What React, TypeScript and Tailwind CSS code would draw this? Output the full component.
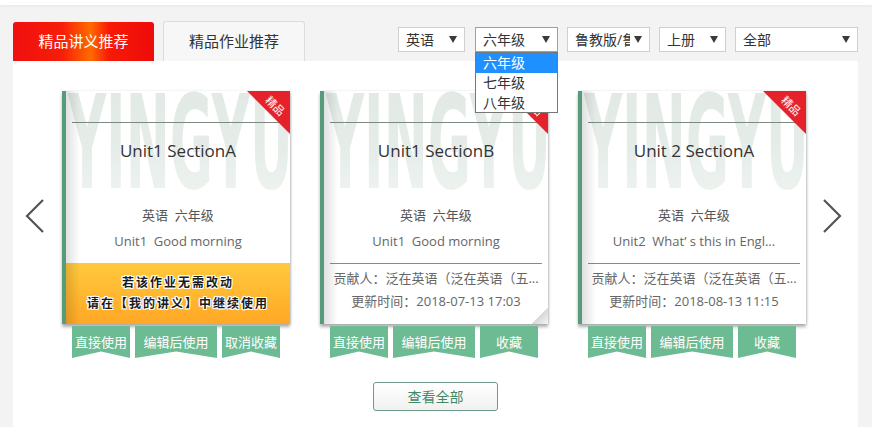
import React from "react";

const FONT = { fontFamily: '"Open Sans","Noto Sans CJK SC",sans-serif' };

function Caret() {
  return (
    <svg width="8" height="7" viewBox="0 0 8 7" className="shrink-0">
      <polygon points="0,0 8,0 4,7" fill="#3a3a3a" />
    </svg>
  );
}

function Select({ w, label, active }: { w: string; label: string; active?: boolean }) {
  return (
    <div
      className={`${w} h-[25px] bg-white border ${active ? "border-[#7ea6d6]" : "border-[#cfcfcf]"} flex items-center pl-[7px] pr-[7px] text-[14px] text-[#333] overflow-hidden`}
    >
      <span className="flex-1 whitespace-nowrap overflow-hidden">{label}</span>
      <span className="bg-white pl-[4px] flex items-center">
        <Caret />
      </span>
    </div>
  );
}

function Watermark() {
  return (
    <div
      className="absolute left-[2px] top-[-13px] text-[130px] leading-none font-bold whitespace-nowrap origin-top-left scale-x-[0.405] pointer-events-none select-none text-transparent bg-clip-text bg-[linear-gradient(180deg,#e1e9e4_0%,#e6ede9_55%,#f0f4f1_100%)]"
      style={{ fontFamily: '"DejaVu Sans",sans-serif' }}
    >
      YINGYU
    </div>
  );
}

function Corner() {
  return (
    <div className="absolute top-0 right-0 w-[43px] h-[43px]">
      <div className="absolute inset-0 bg-[#e5222b] [clip-path:polygon(0_0,100%_0,100%_100%)]" />
      <div className="absolute left-[15px] top-[8px] w-[26px] h-[14px] leading-[14px] text-[11px] text-white text-center rotate-45">
        精品
      </div>
    </div>
  );
}

function Ribbon({ w, label }: { w: string; label: string }) {
  return (
    <div
      className={`${w} h-[32px] bg-[#6dbb93] text-white text-[13px] leading-[18px] pt-[7px] text-center [clip-path:polygon(0_0,100%_0,100%_100%,50%_80%,0_100%)]`}
    >
      {label}
    </div>
  );
}

type CardProps = {
  title: string;
  line2: string;
  orange?: boolean;
  contributor?: string;
  time?: string;
  third: string;
  curl?: boolean;
};

function Card({ title, line2, orange, contributor, time, third, curl }: CardProps) {
  return (
    <div className="w-[228px] flex flex-col shrink-0">
      <div className="relative w-[228px] h-[233px] bg-white border-l-[4px] border-[#579c7a] overflow-hidden shadow-[0_3px_3px_rgba(0,0,0,0.3),1px_0_2px_rgba(0,0,0,0.12)]">
        <Watermark />
        <div className="absolute left-[6px] right-[7px] top-[31px] h-px bg-[#7b8b82]" />
        <Corner />
        <div className="absolute left-0 right-0 top-[47px] text-center text-[17px] text-[#333]">{title}</div>
        <div className="absolute left-0 right-0 top-[115px] text-center text-[13px] text-[#555] whitespace-pre">英语  六年级</div>
        <div className="absolute left-0 right-0 top-[141px] text-center text-[13px] text-[#666] whitespace-pre">{line2}</div>
        {orange ? (
          <div className="absolute left-0 right-0 top-[172px] bottom-0 bg-[linear-gradient(180deg,#ffc93e_0%,#ffb52e_60%,#ffa726_100%)] flex flex-col items-center justify-center gap-[3px] text-[12px] text-[#1a1a1a] tracking-[2px] font-bold [text-shadow:1px_1px_0_#fff,-1px_-1px_0_#fff,1px_-1px_0_#fff,-1px_1px_0_#fff,0_1px_0_#fff,0_-1px_0_#fff,1px_0_0_#fff,-1px_0_0_#fff]">
            <div>若该作业无需改动</div>
            <div>请在【我的讲义】中继续使用</div>
          </div>
        ) : (
          <>
            <div className="absolute left-[6px] right-[6px] top-[172px] h-px bg-[#8a8a8a]" />
            <div className="absolute left-0 right-0 top-[178px] text-center text-[13px] text-[#666] whitespace-nowrap">{contributor}</div>
            <div className="absolute left-0 right-0 top-[201px] text-center text-[13px] text-[#666] whitespace-nowrap">{time}</div>
          </>
        )}
        <div className="absolute left-0 top-0 bottom-0 w-[14px] bg-[linear-gradient(90deg,rgba(0,0,0,0.12),rgba(0,0,0,0))]" />
        {curl && (
          <div className="absolute right-0 bottom-0 w-[16px] h-[16px] bg-[linear-gradient(135deg,rgba(255,255,255,0)_50%,#d8d8d8_50%,#f4f4f4_100%)]" />
        )}
      </div>
      <div className="flex gap-[5px] px-[10px] mt-[2px]">
        <Ribbon w="w-[58px]" label="直接使用" />
        <Ribbon w="w-[82px]" label="编辑后使用" />
        <Ribbon w="w-[58px]" label={third} />
      </div>
    </div>
  );
}

function Chevron({ dir }: { dir: "l" | "r" }) {
  return (
    <svg width="22" height="34" viewBox="0 0 22 34" className="shrink-0">
      <polyline
        points={dir === "l" ? "19,1 3,17 19,33" : "3,1 19,17 3,33"}
        fill="none"
        stroke="#555"
        strokeWidth="2.2"
      />
    </svg>
  );
}

export default function App() {
  return (
    <div className="w-[872px] h-[427px] bg-[#f3f3f3] flex flex-col overflow-hidden" style={FONT}>
      <div className="h-[5px] bg-white shrink-0 shadow-[0_1px_3px_rgba(0,0,0,0.05)]" />
      <div className="h-[56px] shrink-0 flex pl-[13px] pr-[14px]">
        <div className="flex items-end gap-[9px]">
          <div className="w-[141px] h-[39px] rounded-t-[3px] bg-[linear-gradient(90deg,#f00f0f_0%,#f81e08_35%,#ff6a00_55%,#f81a06_68%,#ee0b0b_100%)] text-white text-[15px] flex items-center justify-center">
            精品讲义推荐
          </div>
          <div className="w-[142px] h-[40px] rounded-t-[3px] bg-[#f7f7f7] border border-b-0 border-[#dcdcdc] text-[#333] text-[15px] flex items-center justify-center">
            精品作业推荐
          </div>
        </div>
        <div className="ml-auto mt-[22px] h-[25px] flex">
          <Select w="w-[67px]" label="英语" />
          <div className="relative ml-[10px]">
            <Select w="w-[83px]" label="六年级" active />
            <div className="absolute left-0 top-[25px] w-[83px] bg-white border border-[#777] text-[14px] text-[#333] z-10">
              <div className="h-[20px] leading-[20px] pl-[7px] bg-[#1e90ff] text-white">六年级</div>
              <div className="h-[20px] leading-[20px] pl-[7px]">七年级</div>
              <div className="h-[19px] leading-[19px] pl-[7px]">八年级</div>
            </div>
          </div>
          <div className="ml-[9px]">
            <Select w="w-[83px]" label="鲁教版/鲁教" />
          </div>
          <div className="ml-[9px]">
            <Select w="w-[67px]" label="上册" />
          </div>
          <div className="ml-[9px]">
            <Select w="w-[123px]" label="全部" />
          </div>
        </div>
      </div>
      <div className="ml-[13px] w-[845px] flex-1 bg-white flex flex-col">
        <div className="flex items-start pt-[30px]">
          <div className="w-[49px] pl-[11px] pt-[108px] shrink-0">
            <Chevron dir="l" />
          </div>
          <div className="flex gap-[30px]">
            <Card title="Unit1 SectionA" line2="Unit1  Good morning" orange third="取消收藏" />
            <Card
              title="Unit1 SectionB"
              line2="Unit1  Good morning"
              contributor="贡献人：泛在英语（泛在英语（五..."
              time="更新时间：2018-07-13 17:03"
              third="收藏"
              curl
            />
            <Card
              title="Unit 2 SectionA"
              line2="Unit2  What’ s this in Engl..."
              contributor="贡献人：泛在英语（泛在英语（五..."
              time="更新时间：2018-08-13 11:15"
              third="收藏"
            />
          </div>
          <div className="pl-[15px] pt-[108px] shrink-0">
            <Chevron dir="r" />
          </div>
        </div>
        <div className="mt-[24px] flex justify-center">
          <div className="w-[125px] h-[29px] rounded-[3px] border border-[#6f9c86] bg-[linear-gradient(180deg,#ffffff,#f1f1f1)] text-[#3f8a67] text-[14px] flex items-center justify-center">
            查看全部
          </div>
        </div>
      </div>
    </div>
  );
}
